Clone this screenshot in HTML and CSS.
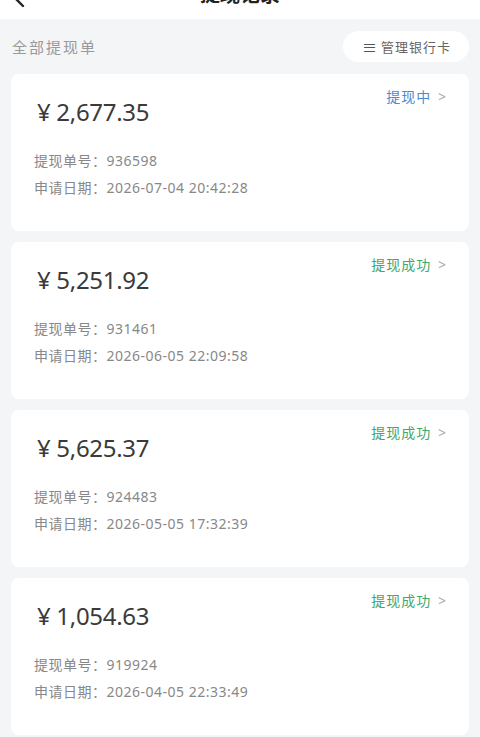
FILE: index.html
```html
<!DOCTYPE html>
<html>
<head>
	<meta charset="utf-8">
	<title>提现记录</title>
	<link rel="stylesheet" href="styles.css">
</head>
<body>
	<header class="topbar">
		<div class="topbar-inner">
			<span class="back">
				<svg width="12" height="20" viewBox="0 0 12 20"><path d="M10 2 L2 10 L10 18" fill="none" stroke="#222" stroke-width="2.4" stroke-linecap="round" stroke-linejoin="round"/></svg>
			</span>
			<h1>提现记录</h1>
		</div>
	</header>

	<main class="page">
		<div class="toolbar">
			<span class="section-title">全部提现单</span>
			<span class="manage-btn"><span class="menu-icon">&#8801;</span> 管理银行卡</span>
		</div>

		<div class="card">
			<div class="card-head">
				<div class="amount">&yen; 2,677.35</div>
				<div class="status pending">提现中 <span class="arrow">&gt;</span></div>
			</div>
			<p class="detail">提现单号：936598</p>
			<p class="detail">申请日期：2026-07-04 20:42:28</p>
		</div>

		<div class="card">
			<div class="card-head">
				<div class="amount">&yen; 5,251.92</div>
				<div class="status done">提现成功 <span class="arrow">&gt;</span></div>
			</div>
			<p class="detail">提现单号：931461</p>
			<p class="detail">申请日期：2026-06-05 22:09:58</p>
		</div>

		<div class="card">
			<div class="card-head">
				<div class="amount">&yen; 5,625.37</div>
				<div class="status done">提现成功 <span class="arrow">&gt;</span></div>
			</div>
			<p class="detail">提现单号：924483</p>
			<p class="detail">申请日期：2026-05-05 17:32:39</p>
		</div>

		<div class="card">
			<div class="card-head">
				<div class="amount">&yen; 1,054.63</div>
				<div class="status done">提现成功 <span class="arrow">&gt;</span></div>
			</div>
			<p class="detail">提现单号：919924</p>
			<p class="detail">申请日期：2026-04-05 22:33:49</p>
		</div>
	</main>
</body>
</html>
```

FILE: styles.css
```css
html {font-family: "Noto Sans", "Noto Sans CJK SC", sans-serif; color:#333;}
body {margin:0; background:#f4f5f7; height:737px; overflow:hidden;}

.topbar {height:19px; overflow:hidden; background:#fff;}
.topbar-inner {height:44px; margin-top:-29px; display:flex; align-items:center;
	justify-content:center; position:relative;}
.topbar h1 {margin:0; font-size:20px; font-weight:700; color:#222;}
.back {position:absolute; left:13px; top:17px;}

.page {padding:0 11px;}
.toolbar {display:flex; justify-content:space-between; align-items:center;
	height:55px;}
.section-title {font-size:15px; color:#999; letter-spacing:2px; margin-left:1px;}
.manage-btn {background:#fff; border-radius:16px; height:31px; padding:0 18px 0 19px;
	display:flex; align-items:center; font-size:13px; color:#666; letter-spacing:1px;}
.menu-icon {font-size:15px; margin-right:3px; color:#555;}

.card {background:#fff; border-radius:8px; height:157px; box-sizing:border-box;
	padding:13px 22px 0 23px; margin-bottom:11px;}
.card-head {display:flex; justify-content:space-between; align-items:flex-start;}
.amount {margin:10px 0 0 3px; font-size:24px; line-height:30px; color:#3a3a3a;
	letter-spacing:-0.3px;}
.status {font-size:14px; line-height:20px; letter-spacing:1px;}
.status .arrow {color:#aaa; margin-left:2px;}
.pending {color:#4a8ad2;}
.done {color:#3ea86b;}

.detail {margin:0; font-size:14px; line-height:27px; color:#888; letter-spacing:0.5px;}
.card-head + .detail {margin-top:20px;}
```
